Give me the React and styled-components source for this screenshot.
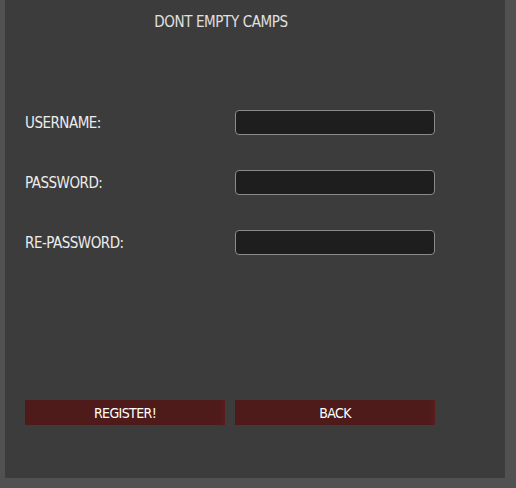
import React from 'react';
import styled, { createGlobalStyle } from 'styled-components';

const GlobalStyle = createGlobalStyle`
  html, body {
    margin: 0;
    padding: 0;
    background: #515151;
  }
`;

const Panel = styled.div`
  width: 500px;
  height: 478px;
  margin-left: 5px;
  box-sizing: border-box;
  padding: 12px 20px 0 20px;
  background: #3c3c3c;
  display: flex;
  flex-direction: column;
  font-family: "DejaVu Sans Condensed", "DejaVu Sans", sans-serif;
  font-stretch: condensed;
`;

const Title = styled.h1`
  width: 392px;
  margin: 0;
  font-size: 15px;
  font-weight: normal;
  letter-spacing: -0.4px;
  line-height: 20px;
  text-align: center;
  color: #e0e0e0;
`;

const Form = styled.div`
  display: grid;
  grid-template-columns: 210px 200px;
  row-gap: 35px;
  align-items: center;
  margin-top: 78px;
`;

const Label = styled.label`
  font-size: 15px;
  letter-spacing: -0.5px;
  color: #ececec;
`;

const Input = styled.input`
  box-sizing: border-box;
  width: 200px;
  height: 25px;
  margin: 0;
  padding: 0 6px;
  background: #1e1e1e;
  border: 1px solid #8a8a8a;
  border-radius: 4px;
  color: #eee;
  outline: none;
`;

const Actions = styled.div`
  display: flex;
  gap: 10px;
  margin-top: 145px;
`;

const Button = styled.button`
  width: 200px;
  height: 25px;
  padding: 0;
  border: none;
  background: linear-gradient(to right, #4e1a1a 0%, #4e1a1a 97%, #5c1c1c 100%);
  color: #fff;
  font-family: inherit;
  font-stretch: condensed;
  font-size: 14px;
  letter-spacing: -0.6px;
  cursor: pointer;
`;

const fields = [
  { label: 'USERNAME:', type: 'text' },
  { label: 'PASSWORD:', type: 'password' },
  { label: 'RE-PASSWORD:', type: 'password' },
];

const App = () => {
  return (
    <>
      <GlobalStyle />
      <Panel>
        <Title>DONT EMPTY CAMPS</Title>
        <Form>
          {fields.map((f) => (
            <React.Fragment key={f.label}>
              <Label>{f.label}</Label>
              <Input type={f.type} />
            </React.Fragment>
          ))}
        </Form>
        <Actions>
          <Button>REGISTER!</Button>
          <Button>BACK</Button>
        </Actions>
      </Panel>
    </>
  );
};

export default App;
